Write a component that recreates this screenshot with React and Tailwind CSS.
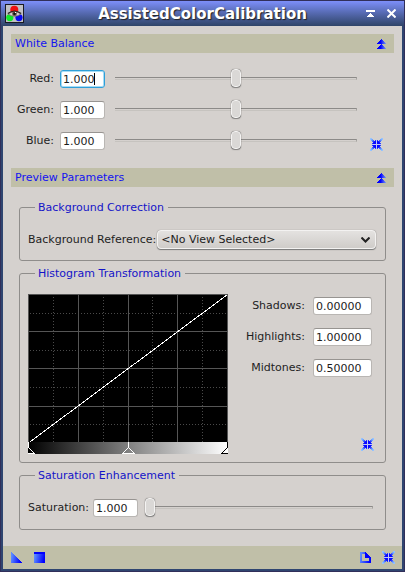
import React from "react";

function CollapseIcon() {
  return (
    <svg width="9" height="10" viewBox="0 0 9 10" shapeRendering="crispEdges" aria-hidden="true">
      <defs>
        <linearGradient id="collapse" x1="0" y1="0" x2="1" y2="0">
          <stop offset="0.4" stopColor="#0000ff" />
          <stop offset="1" stopColor="#7d9cf0" />
        </linearGradient>
      </defs>
      <path
        fill="url(#collapse)"
        d="M4 0h1v1h1v1h1v1h1v1h1v1H0V4h1V3h1V2h1V1h1zM4 5h1v1h1v1h1v1h1v1h1v1H0V9h1V8h1V7h1V6h1z"
      />
    </svg>
  );
}

function ResetIcon() {
  const arrow = "M0 0h2v1h1v1h1v1h1v-1h1v4h-4v-1h1v-1h-1v-1h-1v-1h-1z";
  return (
    <svg width="13" height="13" viewBox="0 0 13 13" shapeRendering="crispEdges" aria-hidden="true">
      <defs>
        <radialGradient id="reset" gradientUnits="userSpaceOnUse" cx="6.5" cy="6.5" r="8">
          <stop offset="0.4" stopColor="#0808ff" />
          <stop offset="0.8" stopColor="#6fa4ff" />
          <stop offset="1" stopColor="#96c4ff" />
        </radialGradient>
      </defs>
      <path fill="#c3c6f2" d="M6 2h1v9H6zM2 6h9v1H2z" />
      <path fill="url(#reset)" d={arrow} />
      <path
        fill="url(#reset)"
        d="M13 0h-2v1h-1v1h-1v1h-1v-1h-1v4h4v-1h-1v-1h1v-1h1v-1h1zM0 13h2v-1h1v-1h1v-1h1v1h1v-4h-4v1h1v1h-1v1h-1v1h-1zM13 13h-2v-1h-1v-1h-1v-1h-1v1h-1v-4h4v1h-1v1h1v1h1v1h1z"
      />
    </svg>
  );
}

function AppIcon() {
  return (
    <svg width="19" height="19" viewBox="0 0 19 19" aria-hidden="true">
      <rect x="0.5" y="0.5" width="18" height="18" fill="#c0c0c4" stroke="#1a1a22" />
      <circle cx="9.3" cy="5.7" r="4" fill="#f01010" />
      <circle cx="4.8" cy="13.6" r="3.6" fill="#10e828" />
      <circle cx="14" cy="13.6" r="3.6" fill="#0a0af0" />
      <path d="M3 10Q9.5 5.5 16 10Q9.5 14.5 3 10z" fill="#d6d0cc" stroke="#77706c" strokeWidth="0.8" />
      <path d="M2.8 9.6Q9.5 4.6 16.2 9.6" fill="none" stroke="#2c2422" strokeWidth="1.3" />
      <circle cx="9.5" cy="9.8" r="2.4" fill="#6b5a50" />
      <circle cx="9.5" cy="9.8" r="1.3" fill="#111" />
      <rect x="10" y="8" width="1" height="1" fill="#fff" />
    </svg>
  );
}

function IconButton({ label, children }) {
  return (
    <button type="button" aria-label={label} className="block shrink-0">
      {children}
    </button>
  );
}

function SectionBar({ title }) {
  return (
    <div className="flex h-[19px] items-center justify-between bg-[#c0bfa8] pl-1 pr-2">
      <h2 className="text-[#1414f0]">{title}</h2>
      <IconButton label={"Collapse " + title}>
        <CollapseIcon />
      </IconButton>
    </div>
  );
}

const FIELD =
  "h-[18px] rounded-[3px] border border-[#b9b6b3] border-t-[#979491] bg-white pl-[2px] text-[#1c1c1c] outline-none";
const FOCUSED =
  "h-[18px] rounded-[3px] border border-[#2f9fd8] bg-white pl-[2px] text-[#1c1c1c] caret-transparent shadow-[inset_0_0_0_1px_#a6dcf6] outline-none";

function Slider({ label, value }) {
  return (
    <input
      type="range"
      aria-label={label}
      min="0"
      max="100"
      defaultValue={value}
      className="mb-px h-[17px] min-w-0 flex-1 appearance-none bg-transparent [&::-webkit-slider-runnable-track]:h-[3px] [&::-webkit-slider-runnable-track]:border-t [&::-webkit-slider-runnable-track]:border-r [&::-webkit-slider-runnable-track]:border-b [&::-webkit-slider-runnable-track]:border-t-[#8c8a88] [&::-webkit-slider-runnable-track]:border-r-[#a5a3a0] [&::-webkit-slider-runnable-track]:border-b-[#c6c3bf] [&::-webkit-slider-thumb]:mt-[-9px] [&::-webkit-slider-thumb]:h-[18px] [&::-webkit-slider-thumb]:w-[10px] [&::-webkit-slider-thumb]:appearance-none [&::-webkit-slider-thumb]:rounded-[4px] [&::-webkit-slider-thumb]:border [&::-webkit-slider-thumb]:border-[#f4f3f2] [&::-webkit-slider-thumb]:bg-[#dad8d6] [&::-webkit-slider-thumb]:shadow-[0_1px_1px_#55555599,0_0_1px_#555]"
    />
  );
}

function ChannelRow({ name, focused }) {
  const id = "wb-" + name;
  return (
    <div className="flex items-center">
      <label htmlFor={id} className="w-[43px] text-right leading-[16px]">
        {name}:
      </label>
      <div className="relative ml-[6px] mr-[10px] flex">
        <input id={id} defaultValue="1.000" className={(focused ? FOCUSED : FIELD) + " w-[45px]"} />
        {focused && <span className="absolute left-[34px] top-[3px] h-3 w-px bg-black" />}
      </div>
      <Slider label={name + " factor"} value={50} />
    </div>
  );
}

function Group({ title, children }) {
  return (
    <fieldset className="min-w-0 rounded-[3px] border border-[#8f8d8b] pl-2 pr-[9px]">
      <legend className="ml-[7px] h-[14px] pl-[3px] pr-1 leading-4 text-[#1414c8]">{title}</legend>
      {children}
    </fieldset>
  );
}

function HistogramRow({ name, value }) {
  const id = "ht-" + name;
  return (
    <div className="mr-1 flex items-center justify-end gap-2">
      <label htmlFor={id}>{name}:</label>
      <input id={id} defaultValue={value} className={FIELD + " w-[59px]"} />
    </div>
  );
}

function CurvePlot() {
  return (
    <svg width="200" height="160" viewBox="0 0 200 160" className="shrink-0" shapeRendering="crispEdges" role="img" aria-label="Transfer curve">
      <defs>
        <linearGradient id="ramp">
          <stop offset="0" stopColor="#000" />
          <stop offset="1" stopColor="#fff" />
        </linearGradient>
      </defs>
      <rect width="200" height="148" fill="#000" />
      <path
        d="M25.5 3V148M75.5 3V148M124.5 3V148M174.5 3V148M2 19.5H200M2 56.5H200M2 93.5H200M2 130.5H200"
        stroke="#4a4a4a"
        strokeDasharray="1 2"
      />
      <path
        d="M0.5 0V148M50.5 0V148M100.5 0V148M149.5 0V148M199.5 0V148M0 0.5H200M0 37.5H200M0 74.5H200M0 112.5H200"
        stroke="#555"
      />
      <path d="M2.5 147.5L199.5 0.5" stroke="#fff" fill="none" />
      <rect y="148" width="200" height="12" fill="url(#ramp)" />
      <path d="M0.5 148V153.5L6.5 159.5H0" stroke="#fff" fill="none" />
      <path d="M100.5 148V153.5L94.5 159.5H106.5L100.5 153.5" stroke="#fff" fill="none" />
      <path d="M199.5 148V153.5L193.5 159.5H200" stroke="#000" fill="none" />
    </svg>
  );
}

export default function App() {
  return (
    <div className="flex min-h-screen w-full flex-col border border-[#312f5a] bg-[#d5d1ce] font-['DejaVu_Sans',sans-serif] text-[11px] leading-[14px] text-[#1e1e1e]">
      <header className="flex h-[25px] items-center bg-linear-to-b from-[#7d8ffa] to-[#2f4468] pl-1 pr-2">
        <AppIcon />
        <h1 className="min-w-0 flex-1 pl-[15px] text-center text-[15px] font-bold text-white [text-shadow:1px_1px_1px_#222]">
          AssistedColorCalibration
        </h1>
        <div className="flex items-center gap-3">
          <IconButton label="Shade window">
            <svg width="9" height="7" viewBox="0 0 9 7" shapeRendering="crispEdges" fill="#fff">
              <path d="M0 0h9v2H0zM4 3h1v1h1v1h1v1h1v1H1V6h1V5h1V4h1z" />
            </svg>
          </IconButton>
          <IconButton label="Close window">
            <svg width="9" height="9" viewBox="0 0 9 9" stroke="#fff" strokeWidth="2">
              <path d="M0.5 0.5L8.5 8.5M8.5 0.5L0.5 8.5" />
            </svg>
          </IconButton>
        </div>
      </header>

      <div className="flex flex-1 flex-col border-x-2 border-b-2 border-[#2f4570]">
        <main className="px-2 pb-4 pt-2">
          <SectionBar title="White Balance" />
          <div className="flex items-end pb-[17px] pr-[11px] pt-[17px]">
            <div className="mb-px flex min-w-0 flex-1 flex-col gap-[13px]">
              <ChannelRow name="Red" focused />
              <ChannelRow name="Green" />
              <ChannelRow name="Blue" />
            </div>
            <div className="ml-[13px]">
              <IconButton label="Reset white balance">
                <ResetIcon />
              </IconButton>
            </div>
          </div>

          <SectionBar title="Preview Parameters" />
          <div className="flex flex-col gap-[5px] px-2 pt-[13px]">
            <Group title="Background Correction">
              <div className="flex items-center pb-[11px] pt-4">
                <label htmlFor="bg-ref" className="mr-px shrink-0">
                  Background Reference:
                </label>
                <div className="relative flex min-w-0 flex-1">
                  <select
                    id="bg-ref"
                    className="h-[19px] w-full appearance-none rounded-[4px] border border-[#f3f2f1] bg-linear-to-b from-[#e4e2e0] to-[#cfccc9] pl-[3px] text-[#1c1c1c] shadow-[0_1px_1px_#777,0_0_1px_#777]"
                  >
                    <option>&lt;No View Selected&gt;</option>
                  </select>
                  <svg
                    width="9"
                    height="6"
                    viewBox="0 0 9 6"
                    className="pointer-events-none absolute right-[6px] top-[7px]"
                    fill="none"
                    stroke="#222"
                    strokeWidth="2"
                    aria-hidden="true"
                  >
                    <path d="M0.5 0.5L4.5 4.5L8.5 0.5" />
                  </svg>
                </div>
              </div>
            </Group>

            <Group title="Histogram Transformation">
              <div className="flex pb-2 pt-[14px]">
                <CurvePlot />
                <div className="flex flex-1 flex-col justify-between py-[3px]">
                  <div className="flex flex-col gap-[13px]">
                    <HistogramRow name="Shadows" value="0.00000" />
                    <HistogramRow name="Highlights" value="1.00000" />
                    <HistogramRow name="Midtones" value="0.50000" />
                  </div>
                  <div className="mr-[2px] self-end">
                    <IconButton label="Reset histogram">
                      <ResetIcon />
                    </IconButton>
                  </div>
                </div>
              </div>
            </Group>

            <Group title="Saturation Enhancement">
              <div className="flex items-center pb-3 pr-[3px] pt-[17px]">
                <label htmlFor="saturation" className="mr-1">
                  Saturation:
                </label>
                <input id="saturation" defaultValue="1.000" className={FIELD + " mr-[7px] w-[45px]"} />
                <Slider label="Saturation amount" value={0} />
              </div>
            </Group>
          </div>
        </main>

        <footer className="mt-auto flex h-[23px] items-center justify-between bg-[#c0bfa8] pl-2 pr-[7px]">
          <div className="flex gap-3">
            <IconButton label="New instance">
              <svg width="11" height="11" viewBox="0 0 11 11" shapeRendering="crispEdges">
                <defs>
                  <linearGradient id="blue" x1="0" y1="0.6" x2="1" y2="0.8">
                    <stop offset="0" stopColor="#5c8cff" />
                    <stop offset="0.9" stopColor="#0000ff" />
                  </linearGradient>
                </defs>
                <path d="M0 0L11 11H0z" fill="url(#blue)" />
              </svg>
            </IconButton>
            <IconButton label="Apply">
              <svg width="11" height="11" viewBox="0 0 11 11" shapeRendering="crispEdges">
                <rect width="11" height="11" fill="url(#blue)" />
                <rect width="11" height="2" fill="#0000ff" />
              </svg>
            </IconButton>
          </div>
          <div className="flex items-center gap-[11px]">
            <IconButton label="Documentation">
              <svg width="11" height="11" viewBox="0 0 11 11" shapeRendering="crispEdges">
                <path fillRule="evenodd" d="M0 0H6V1H7V2H8V3H9V4H10V5H11V11H0zM2 2V9H9V6H5V2z" fill="url(#blue)" />
                <path d="M5 0h1v1h1v1h1v1h1v1h1v1h1v1H5z" fill="#0000ff" />
              </svg>
            </IconButton>
            <IconButton label="Reset all">
              <ResetIcon />
            </IconButton>
          </div>
        </footer>
      </div>
    </div>
  );
}
